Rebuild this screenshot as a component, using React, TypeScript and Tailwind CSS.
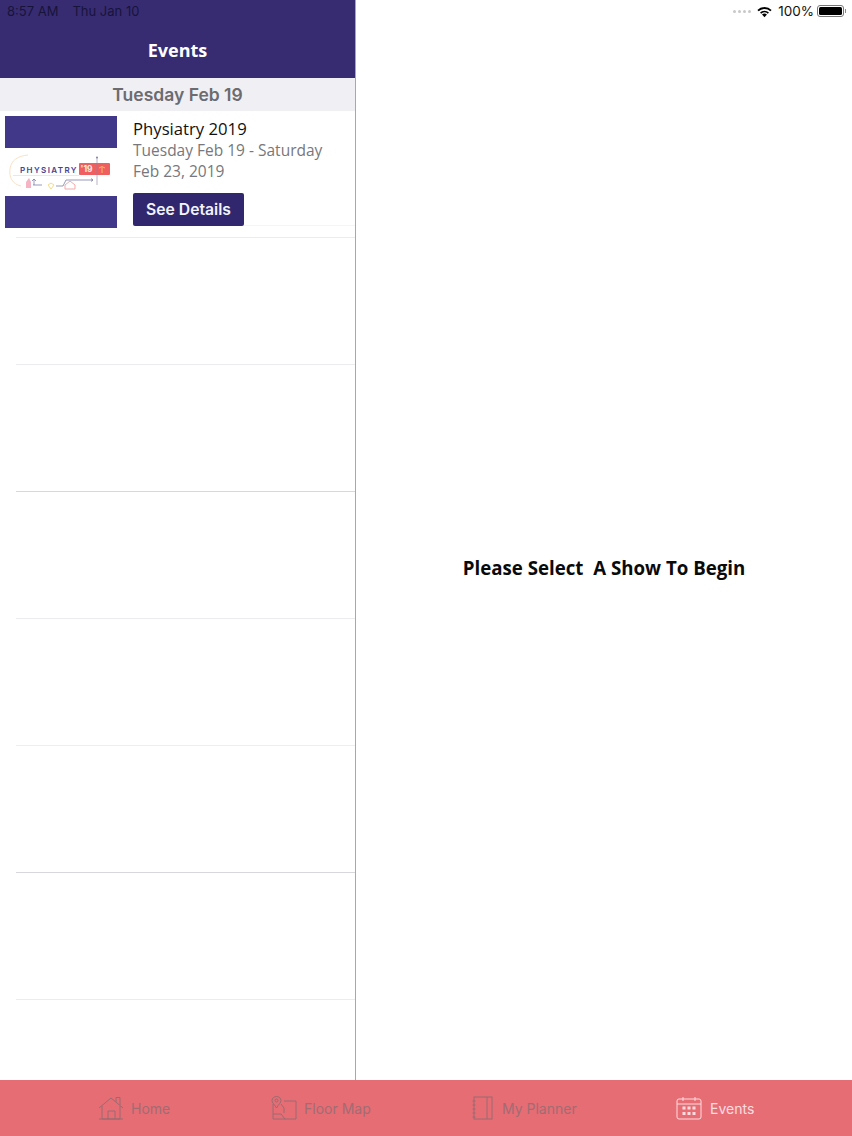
import React from "react";

const open = "font-['Open_Sans',sans-serif]";
const inter = "font-['Inter',sans-serif]";

function Logo() {
  return (
    <svg viewBox="0 0 112 48" className="h-[48px] w-[112px] block">
      <path d="M16 38 C7 36 4 29 5 21 C6 12 13 8 23 7" fill="none" stroke="#f6d9b8" strokeWidth="0.8" />
      <path d="M8 27.500 H74" fill="none" stroke="#f4d48c" strokeWidth="0.7" opacity="0.8" />
      <text x="15" y="24.500" fontFamily="Inter, sans-serif" fontSize="8" fontWeight="600" letterSpacing="1.400" fill="#45428f">PHYSIATRY</text>
      <rect x="74" y="15" width="31" height="12" rx="1" fill="#ef5f5f" />
      <text x="75.500" y="24" fontFamily="Inter, sans-serif" fontSize="8.500" fontWeight="700" fill="#ffe9e0">'19</text>
      <path d="M97 25 v-6 M94 20 q3 -3 6 0" fill="none" stroke="#f8b860" strokeWidth="1" />
      <path d="M92 9 V37" stroke="#8a80a8" strokeWidth="0.6" />
      <circle cx="92" cy="9.500" r="1" fill="#8a80a8" />
      <path d="M28 37 H37 M29 37 V31 M27 33 L29 31 L31 33" fill="none" stroke="#6a6fa0" strokeWidth="0.7" />
      <path d="M51 38 H58 L61 32 H88 M86 30.500 L88 32 L86 33.500" fill="none" stroke="#6a6fa0" strokeWidth="0.7" />
      <path d="M21 40 V34 L24 30 L26 34 V40 Z" fill="#f4b4c4" />
      <path d="M43 37 L46 35 L49 37 L46 41 Z" fill="none" stroke="#f3dc86" strokeWidth="1" />
      <path d="M60 41 V37 L65 33 L70 37 V41 Z" fill="none" stroke="#f2a9a9" strokeWidth="1" />
    </svg>
  );
}

function HomeIcon() {
  return (
    <svg width="26" height="24" viewBox="0 0 26 24" fill="none" stroke="#9a6a70" strokeWidth="1">
      <path d="M1 12 L13 2 L25 12" />
      <path d="M18 6 V1.500 H22 V9" />
      <path d="M4 10 V23 H22 V10" />
      <path d="M10 23 V15 H17 V23" />
      <path d="M1 23 H25" />
    </svg>
  );
}
function MapIcon() {
  return (
    <svg width="26" height="24" viewBox="0 0 26 24" fill="none" stroke="#9a6a70" strokeWidth="1">
      <path d="M2 8 V23 H25 V5 H13" />
      <path d="M2 18 H10 L14 23" />
      <path d="M5.500 12 C3 8 1 6.500 1 4.500 A4.500 4 0 0 1 10 4.500 C10 6.500 8 8 5.500 12 Z" />
      <circle cx="5.500" cy="4.500" r="1.500" />
      <path d="M10 8 L13 12 V17" />
    </svg>
  );
}
function PlannerIcon() {
  return (
    <svg width="22" height="24" viewBox="0 0 22 24" fill="none" stroke="#9a6a70" strokeWidth="1">
      <rect x="2" y="1" width="18" height="22" />
      <path d="M15 1 V23" />
      <path d="M0.500 5 H3.500 M0.500 9 H3.500 M0.500 13 H3.500 M0.500 17 H3.500 M0.500 21 H3.500" />
    </svg>
  );
}
function CalendarIcon() {
  return (
    <svg width="26" height="24" viewBox="0 0 26 24" fill="none" stroke="#fbdde0" strokeWidth="1">
      <rect x="1" y="3" width="24" height="20" rx="2" />
      <path d="M1 8 H25 M7 1 V5 M19 1 V5" />
      <g fill="#fbdde0" stroke="none">
        <rect x="6.500" y="10.500" width="3" height="3" />
        <rect x="11.500" y="10.500" width="3" height="3" />
        <rect x="16.500" y="10.500" width="3" height="3" />
        <rect x="6.500" y="16" width="3" height="3" />
        <rect x="11.500" y="16" width="3" height="3" />
        <rect x="16.500" y="16" width="3" height="3" />
      </g>
    </svg>
  );
}

function Tab({ icon, label, active, w, gap }: { icon: React.ReactNode; label: string; active?: boolean; w: string; gap: string }) {
  return (
    <div className={`flex items-center ${gap} ${w}`}>
      {icon}
      <span className={`${inter} relative top-[1px] text-[14px] leading-[20px] ${active ? "text-[#fbdde0]" : "text-[#a06c72]"}`}>{label}</span>
    </div>
  );
}

const lines = ["#ececf0", "#d8d8dc", "#ececf0", "#eeeef2", "#d8d8dc", "#eeeaf0"];

export default function App() {
  return (
    <div className="relative flex h-[1136px] w-[852px] flex-col overflow-hidden bg-white">
      <div className="flex min-h-0 flex-1">
        <div className="flex w-[356px] shrink-0 flex-col border-r border-[#a8a8ac]">
          <div className="flex h-[78px] shrink-0 flex-col bg-[#372c72]">
            <div className={`${inter} h-[22px] pl-[7px] pt-[3px] text-[13px] leading-[16px] text-[#17143a]`}>
              8:57 AM<span className="ml-[14px]">Thu Jan 10</span>
            </div>
            <div className={`${open} mt-[12px] text-center text-[18px] font-bold leading-[32px] text-white`}>Events</div>
          </div>
          <div className={`${inter} h-[33px] shrink-0 bg-[#efeff4] text-center text-[17.500px] font-semibold leading-[34px] text-[#6b6b70]`}>
            Tuesday Feb 19
          </div>
          <div className="flex h-[127px] shrink-0 flex-col">
            <div className="flex h-[117px] gap-[16px] pl-[5px] pt-[5px]">
              <div className="flex h-[112px] w-[112px] shrink-0 flex-col">
                <div className="h-[32px] bg-[#423889]" />
                <Logo />
                <div className="h-[32px] bg-[#423889]" />
              </div>
              <div className="flex min-w-0 flex-1 flex-col">
                <div className={`${open} text-[16.700px] leading-[26px] text-[#111111]`}>Physiatry 2019</div>
                <div className={`${open} -mt-[2px] w-[200px] text-[15.500px] leading-[21px] text-[#77777c]`}>Tuesday Feb 19 - Saturday Feb 23, 2019</div>
                <div className="mt-[11px] flex">
                  <div className={`${inter} flex h-[33px] w-[111px] items-center justify-center rounded-[2px] bg-[#31276f] pt-[1px] text-[15.700px] font-semibold text-[#f4f4f8]`}>
                    See Details
                  </div>
                  <div className="flex-1 border-b border-[#f5f5f7]" />
                </div>
              </div>
            </div>
            <div className="ml-[16px] mt-auto border-b border-[#ececf0]" />
          </div>
          {lines.map((c, i) => (
            <div key={i} className="ml-[16px] flex h-[127px] shrink-0 flex-col justify-end">
              <div className="h-[1px]" style={{ backgroundColor: c }} />
            </div>
          ))}
        </div>
        <div className="relative flex flex-1 items-center justify-center">
          <div className={`${open} mt-[55px] whitespace-pre text-[18.700px] font-bold leading-[24px] text-[#0a0a0a]`}>Please Select  A Show To Begin</div>
          <div className="absolute right-[6px] top-[2px] flex items-center">
            <div className="mr-[5px] flex gap-[2px]">
              {[0, 1, 2, 3].map((i) => (
                <span key={i} className="h-[3px] w-[3px] rounded-full bg-[#c8c8c8]" />
              ))}
            </div>
            <svg width="17" height="13" viewBox="0 0 16 12" className="mr-[5px]">
              <path d="M8 11.500 L5.700 8.900 A3.400 3.400 0 0 1 10.300 8.900 Z" fill="#000" />
              <path d="M3.800 6.900 A6.200 6.200 0 0 1 12.200 6.900 L11.100 8 A4.700 4.700 0 0 0 4.900 8 Z" fill="#000" />
              <path d="M1.300 4.500 A9.800 9.800 0 0 1 14.700 4.500 L13.500 5.800 A8 8 0 0 0 2.500 5.800 Z" fill="#000" />
            </svg>
            <span className={`${inter} text-[13.500px] leading-[18px] text-[#111]`}>100%</span>
            <div className="ml-[3px] flex items-center">
              <div className="h-[12px] w-[27px] rounded-[3px] border border-[#777] p-[1px]">
                <div className="h-full w-full rounded-[1.500px] bg-black" />
              </div>
              <div className="ml-[1px] h-[4px] w-[1px] bg-[#888]" />
            </div>
          </div>
        </div>
      </div>
      <div className="flex h-[56px] shrink-0 items-center bg-[#e76d75] pl-[98px]">
        <Tab w="w-[173px]" gap="gap-[7px]" icon={<HomeIcon />} label="Home" />
        <Tab w="w-[201px]" gap="gap-[7px]" icon={<MapIcon />} label="Floor Map" />
        <Tab w="w-[204px]" gap="gap-[8px]" icon={<PlannerIcon />} label="My Planner" />
        <Tab icon={<CalendarIcon />} label="Events" active w="w-[100px]" gap="gap-[8px]" />
      </div>
    </div>
  );
}
